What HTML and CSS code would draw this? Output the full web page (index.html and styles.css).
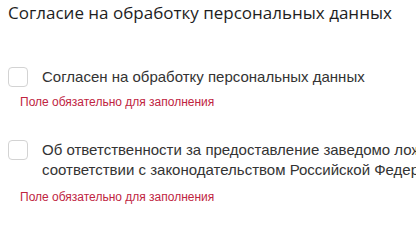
FILE: index.html
```html
<!DOCTYPE html>
<html lang="ru">
<head>
<meta charset="utf-8">
<link rel="stylesheet" href="styles.css">
</head>
<body>
<div class="page">
  <h2 class="title">Согласие на обработку персональных данных</h2>
  <div class="field field-first">
    <label class="check">
      <span class="box"></span>
      <span class="label">Согласен на обработку персональных данных</span>
    </label>
    <div class="error">Поле обязательно для заполнения</div>
  </div>
  <div class="field">
    <label class="check">
      <span class="box"></span>
      <span class="label">Об ответственности за предоставление заведомо ложных сведений предупрежден в соответствии с законодательством Российской Федерации</span>
    </label>
    <div class="error error-wide">Поле обязательно для заполнения</div>
  </div>
</div>
</body>
</html>
```
FILE: styles.css
```css
html, body {
  margin: 0;
  padding: 0;
  background: #ffffff;
  overflow: hidden;
}
.page {
  width: 640px;
  padding: 0 8px;
}
.title {
  margin: 0;
  padding-top: 1px;
  font-family: "Open Sans", sans-serif;
  font-weight: 400;
  font-size: 17px;
  line-height: 24px;
  color: #1e1e1e;
}
.field-first {
  margin-top: 42px;
}
.field {
  margin-bottom: 31px;
}
.check {
  display: flex;
  align-items: flex-start;
  gap: 14px;
}
.box {
  flex: none;
  width: 18px;
  height: 18px;
  border: 1px solid #d3d3d3;
  border-radius: 4px;
  background: #fff;
}
.label {
  font-family: "Liberation Sans", Arial, sans-serif;
  font-size: 15px;
  line-height: 20px;
  color: #333333;
}
.error {
  margin-top: 8px;
  padding-left: 12px;
  font-family: "Liberation Sans", Arial, sans-serif;
  font-size: 12px;
  line-height: 14px;
  color: #c0243f;
}
.error-wide {
  margin-top: 10px;
}
```
